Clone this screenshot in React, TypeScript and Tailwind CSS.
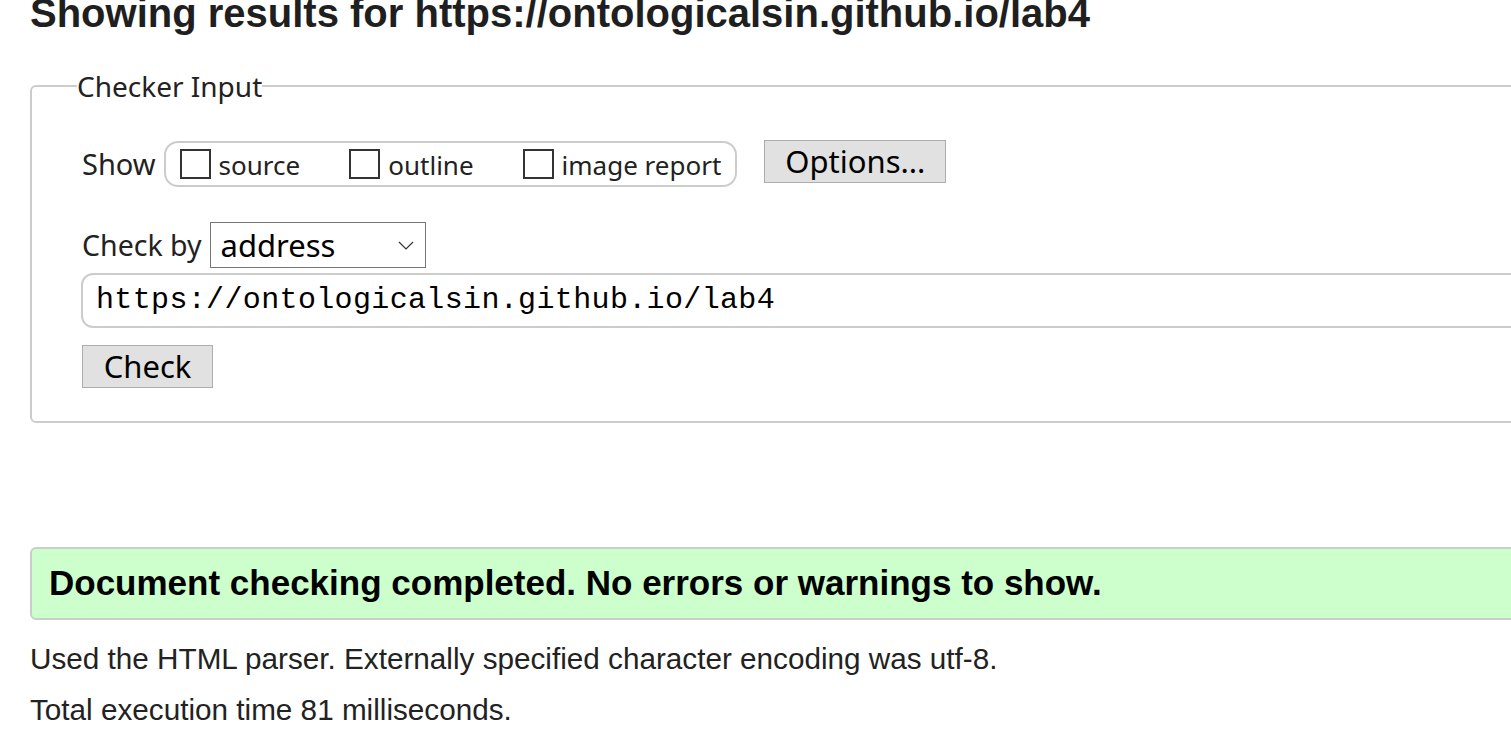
import React from "react";

const ui = "font-['Segoe_UI','Noto_Sans','Open_Sans',sans-serif]";

function Box({label, gap}: {label: string; gap?: boolean}) {
    return (
        <label className={`flex items-end ${gap ? "ml-[49px]" : ""}`}>
            <span className="block w-[31px] h-[30px] border-2 border-[#333] bg-white mb-[1px]"/>
            <span className="ml-[8px] text-[26px] leading-[30px] text-[#222]">{label}</span>
        </label>
    );
}

export default function App() {
    return (
        <div className="w-full h-[736px] overflow-hidden bg-white text-[#222]">
            <div className="w-[1600px] pl-[30px]">
                <h2 className="mt-[-6px] h-[38px] leading-[38px] text-[40px] font-bold font-['Liberation_Sans',Arial,sans-serif] text-[#1f1f1f] whitespace-nowrap">
                    Showing results for https://ontologicalsin.github.io/lab4
                </h2>

                <fieldset className={`mt-[39px] border-2 border-[#ccc] rounded-[6px] pb-[33px] ${ui}`}>
                    <legend className="ml-[45px] text-[28px] leading-[30px] text-[#222]">Checker Input</legend>

                    <div className="pl-[50px] pt-[40px] flex items-center">
                        <span className="text-[29px] mr-[8px]">Show</span>
                        <div className="h-[46px] border-2 border-[#ccc] rounded-[14px] pl-[14px] pr-[14px] flex items-center">
                            <Box label="source"/>
                            <Box label="outline" gap/>
                            <Box label="image report" gap/>
                        </div>
                        <button className="ml-[27px] self-start mt-[-1px] w-[182px] h-[43px] bg-[#e1e1e1] border border-[#adadad] text-[31px] leading-none text-black">
                            Options...
                        </button>
                    </div>

                    <div className="pl-[50px] mt-[35px] flex items-center">
                        <span className="text-[28.5px] mr-[8px]">Check by</span>
                        <div className="w-[216px] h-[46px] border border-[#767676] flex items-center justify-between pl-[10px] pr-[11px]">
                            <span className="text-[31px] text-black">address</span>
                            <svg width="16" height="9" viewBox="0 0 16 9" fill="none" stroke="#333" strokeWidth="1.2">
                                <path d="M1 1l7 7 7-7"/>
                            </svg>
                        </div>
                    </div>

                    <div className="pl-[49px] mt-[5px]">
                        <div className="h-[55px] border-2 border-[#ccc] rounded-[12px] flex items-center pl-[13px]">
                            <span className="text-[30px] tracking-[0.35px] text-black font-['Liberation_Mono','DejaVu_Sans_Mono',monospace]">
                                https://ontologicalsin.github.io/lab4
                            </span>
                        </div>
                    </div>

                    <div className="pl-[50px] mt-[17px]">
                        <button className="w-[131px] h-[43px] bg-[#e1e1e1] border border-[#adadad] text-[31px] leading-none text-black">
                            Check
                        </button>
                    </div>
                </fieldset>

                <div className="mt-[124px] h-[73px] border-2 border-[#ccc] rounded-[6px] bg-[#ccffcc] flex items-center pl-[17px]">
                    <span className="text-[35px] font-bold text-black font-['Liberation_Sans',Arial,sans-serif] whitespace-nowrap">
                        Document checking completed. No errors or warnings to show.
                    </span>
                </div>

                <div className="font-['Liberation_Sans',Arial,sans-serif] text-[29.7px] text-[#222]">
                    <p className="mt-[22px] leading-[34px]">Used the HTML parser. Externally specified character encoding was utf-8.</p>
                    <p className="mt-[17px] leading-[34px]">Total execution time 81 milliseconds.</p>
                </div>
            </div>
        </div>
    );
}
